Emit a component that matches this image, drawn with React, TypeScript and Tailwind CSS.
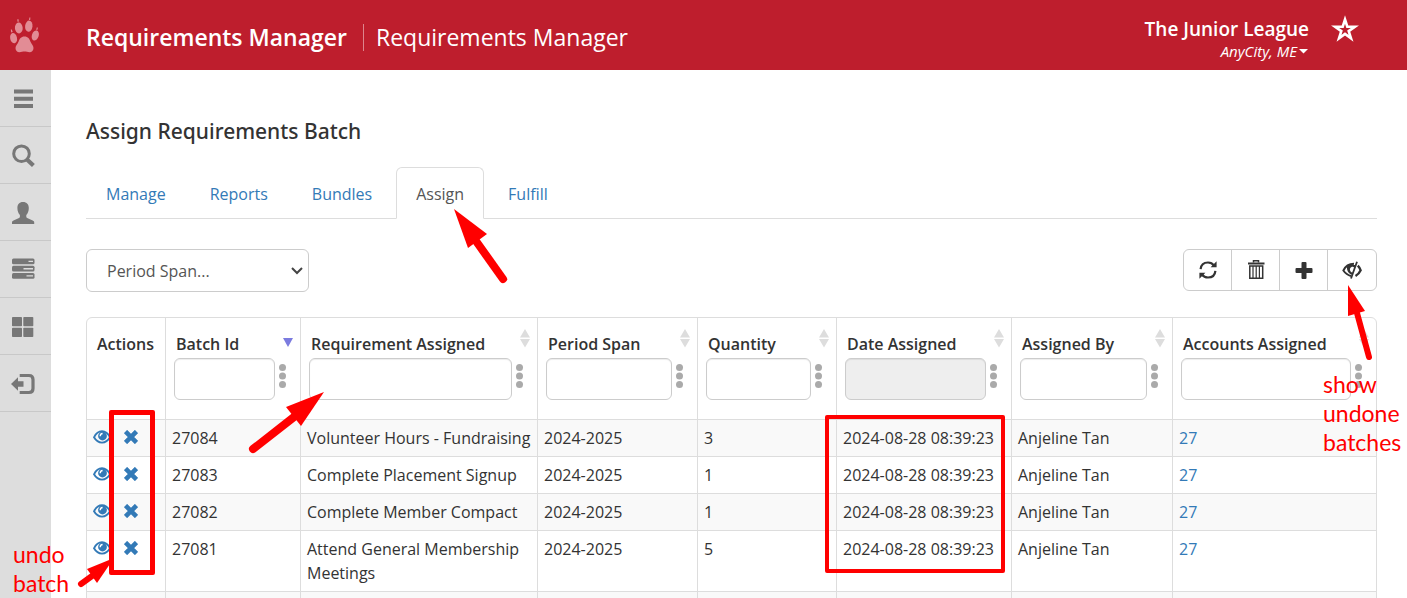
import React from "react";

type Batch = {
  id: string;
  requirement: string;
  period: string;
  quantity: number;
  date: string;
  assignedBy: string;
  accounts: number;
};

type Column = {
  label: string;
  width: string;
  sort?: "none" | "desc";
  disabled?: boolean;
};

const columns: Column[] = [
  { label: "Batch Id", width: "w-[135px]", sort: "desc" },
  { label: "Requirement Assigned", width: "w-[237px]", sort: "none" },
  { label: "Period Span", width: "w-[160px]", sort: "none" },
  { label: "Quantity", width: "w-[139px]", sort: "none" },
  {
    label: "Date Assigned",
    width: "w-[175px]",
    sort: "none",
    disabled: true,
  },
  { label: "Assigned By", width: "w-[161px]", sort: "none" },
  { label: "Accounts Assigned", width: "w-auto", sort: "none" },
];

const requirements = [
  "Volunteer Hours - Fundraising",
  "Complete Placement Signup",
  "Complete Member Compact",
  "Attend General Membership Meetings",
];

const quantities = [3, 1, 1, 5];

const batches: Batch[] = requirements.map((requirement, i) => ({
  id: String(27084 - i),
  requirement,
  period: "2024-2025",
  quantity: quantities[i],
  date: "2024-08-28 08:39:23",
  assignedBy: "Anjeline Tan",
  accounts: 27,
}));

const tabs = ["Manage", "Reports", "Bundles", "Assign", "Fulfill"];

const PawIcon = () => (
  <svg viewBox="0 0 30 36" className="h-9 w-[30px]" fill="#e28c95">
    <ellipse cx="9.8" cy="11" rx="3.9" ry="5.4" transform="rotate(-4 9.8 11)" />
    <ellipse cx="19.8" cy="9.2" rx="3.7" ry="5.6" transform="rotate(7 19.8 9.2)" />
    <ellipse cx="4.6" cy="21.2" rx="3.4" ry="5.2" transform="rotate(-12 4.6 21.2)" />
    <ellipse cx="26.3" cy="18.5" rx="3.4" ry="5.2" transform="rotate(18 26.3 18.5)" />
    <path d="M15.500 19.500c3.500 0 5 2.400 6 5.200.8 2 3 3.600 3 6.300 0 2.600-1.600 4.200-4 4.200-2 0-3-.7-5-.7s-3 .7-5 .7c-2.400 0-4-1.600-4-4.200 0-2.700 2.300-4.300 3-6.300 1-2.800 2.500-5.200 6-5.200z" />
    <path d="M8.300 4.500l.2-2.500 1 .2.300 2.500zM20 3l.4-2.600 1 .2-.2 2.500zM2.200 15.500l-.4-2.900 1-.2.900 2.500zM27.200 12.800l.7-2.500 1 .4-.6 2.400z" />
  </svg>
);

const MenuIcon = () => (
  <svg viewBox="0 0 24 24" className="size-6" fill="#777">
    <path d="M3 2.500h19v4H3zM3 9.700h19v4H3zM3 17h19v4H3z" />
  </svg>
);

const SearchIcon = () => (
  <svg viewBox="0 0 24 24" className="size-6" fill="none" stroke="#777">
    <circle cx="10.500" cy="9.700" r="7.800" strokeWidth="3" />
    <path d="M16 15.500l6.400 6" strokeWidth="4.200" />
  </svg>
);

const UserIcon = () => (
  <svg viewBox="0 0 24 24" className="size-6" fill="#777">
    <path d="M12 1c3.800 0 5.800 2.500 5.800 6 0 3.200-1 5.300-2.500 7v1.700c0 .7.300 1 .9 1.300l5.500 2.500c1 .5 1.500 1 1.500 2V23H1v-1.500c0-1 .5-1.500 1.500-2L8 17c.6-.3.900-.6.900-1.300V14c-1.500-1.700-2.500-3.800-2.500-7 0-3.500 1.800-6 5.600-6z" />
  </svg>
);

const TasksIcon = () => (
  <svg viewBox="0 0 24 24" className="size-6" fill="#777">
    <rect x="1" y=".500" width="22.500" height="5.800" rx="1.500" />
    <rect x="1" y="7.800" width="22.500" height="5.800" rx="1.500" />
    <rect x="1" y="15" width="22.500" height="5.800" rx="1.500" />
    <path d="M17.500 2.700h4.500v1.400h-4.500zM12.500 10H22v1.500h-9.500zM15.500 17.200H22v1.400h-6.500z" fill="#ddd" />
  </svg>
);

const GridIcon = () => (
  <svg viewBox="0 0 24 24" className="size-6" fill="#777">
    <rect x="1" y="2" width="10" height="9.200" rx=".8" />
    <rect x="12.300" y="2" width="10" height="9.200" rx=".8" />
    <rect x="1" y="12.800" width="10" height="9.200" rx=".8" />
    <rect x="12.300" y="12.800" width="10" height="9.200" rx=".8" />
  </svg>
);

const LogoutIcon = () => (
  <svg viewBox="0 0 24 24" className="size-6" fill="#777">
    <path d="M0 12l7-6.700v4h5.500v5.400H7v4z" />
    <path d="M8.700 3.500h9.300c2.700 0 4 1.300 4 4v9c0 2.700-1.300 4-4 4H8.700" fill="none" stroke="#777" strokeWidth="3.200" />
  </svg>
);

const RefreshIcon = () => (
  <svg viewBox="0 0 20 20" className="size-5" fill="none" stroke="#333" strokeWidth="2.200">
    <path d="M2.600 9.200C3 5 6 2.500 10 2.500c2.600 0 4.600 1 6 3M17.400 10.800c-.4 4.200-3.400 6.700-7.400 6.700-2.600 0-4.600-1-6-3" />
    <path d="M18.600 1.300v6h-6zM1.400 18.700v-6h6z" fill="#333" stroke="none" />
  </svg>
);

const TrashIcon = () => (
  <svg viewBox="0 0 20 20" className="size-5" fill="none" stroke="#333">
    <path d="M7.500 2.500V.8h5v1.700" strokeWidth="1.500" />
    <path d="M2 3.500h16.500" strokeWidth="2" />
    <path d="M3.800 6v12.200h12.900V6z" strokeWidth="1.500" />
    <path d="M7 6v12M10.200 6v12M13.400 6v12" strokeWidth="1.200" />
  </svg>
);

const PlusIcon = () => (
  <svg viewBox="0 0 20 20" className="size-5" fill="#333">
    <rect x="7.500" y="2" width="5" height="17" rx="1" />
    <rect x="1.500" y="8" width="17" height="5" rx="1" />
  </svg>
);

const HideIcon = () => (
  <svg viewBox="0 0 20 20" className="size-5" fill="none" stroke="#333">
    <path d="M9 16c-3.500-.8-6-3.200-7.600-5.500C3 7 6.500 3.800 12 3.800" strokeWidth="2" />
    <path d="M5.500 5h8.200l-1.200 3.200c-.8-1.300-2-1.600-3-1.200-1.600.6-2 2.500-1.200 4 .6 1.200 1.500 1.500 2.700 1.500l-.8 2.300C6.300 13.800 3.800 9.500 5.500 5z" fill="#333" stroke="none" />
    <path d="M15 1.800L9 18.500" strokeWidth="1.800" />
    <path d="M15.800 5.600c1.300 1.300 2.300 3 2.900 4.700-.9 2-2.600 4.200-5.200 5.700" strokeWidth="2.300" />
  </svg>
);

const EyeIcon = () => (
  <svg viewBox="0 0 18 14" className="h-3.5 w-[18px]" fill="none" stroke="#337ab7">
    <path d="M1 7.300C3 3.300 6 1.300 9 1.300s6 2 8 6c-2 3.500-5 5.300-8 5.300s-6-1.800-8-5.300z" strokeWidth="1.900" />
    <circle cx="9.500" cy="6" r="4.400" fill="#337ab7" stroke="none" />
    <path d="M7.200 6.200c0-1.600.8-2.500 2.400-2.700" stroke="#fff" strokeWidth="1.400" />
  </svg>
);

const CrossIcon = () => (
  <svg viewBox="0 0 14 14" className="size-3.5" stroke="#337ab7" strokeWidth="4.600">
    <path d="M1.500 1.500l11 11M12.500 1.500l-11 11" />
  </svg>
);

const SortIcon = ({ direction }: { direction: "none" | "desc" }) => {
  if (direction === "desc") {
    return (
      <svg viewBox="0 0 12 20" className="h-5 w-3">
        <path d="M1 10h10L6 19z" fill="#7b7bdf" />
      </svg>
    );
  }
  return (
    <svg viewBox="0 0 12 20" className="h-5 w-3" fill="#ddd">
      <path d="M6 1l5 8.500H1zM1 11h10l-5 8.500z" />
    </svg>
  );
};

const DotsIcon = () => (
  <svg viewBox="0 0 8 24" className="h-6 w-2" fill="#aaa">
    <circle cx="3.500" cy="3.500" r="3.500" />
    <circle cx="3.500" cy="12" r="3.500" />
    <circle cx="3.500" cy="20.500" r="3.500" />
  </svg>
);

const Header = () => (
  <header className="flex h-[70px] items-center bg-[#be1e2d] text-white">
    <a href="#" aria-label="Home" className="ml-[9px] w-[77px]">
      <PawIcon />
    </a>
    <h1 className="flex items-center pt-1 text-[23px] leading-8">
      <span className="font-semibold">Requirements Manager</span>
      <span className="mr-3 ml-4 h-[27px] w-px bg-[#dd858d]" />
      <span>Requirements Manager</span>
    </h1>
    <div className="ml-auto flex items-start">
      <button className="flex flex-col items-end pt-2">
        <span className="text-[19px] leading-6 font-semibold">
          The Junior League
        </span>
        <span className="flex items-center text-[15px] leading-5 italic">
          AnyCity, ME
          <svg viewBox="0 0 12 8" className="h-2 w-3" fill="white">
            <path d="M2 2h9L6.500 6.500z" />
          </svg>
        </span>
      </button>
      <button aria-label="Favorite" className="mt-1.5 mr-12 ml-[22px]">
        <svg viewBox="0 0 28 28" className="size-7" fill="none" stroke="white" strokeWidth="2.600">
          <path d="M14 4.500l2.300 7.200h7.600l-6.200 4.400 2.300 7.200-6-4.400-6 4.400 2.300-7.200-6.200-4.400h7.600z" />
        </svg>
      </button>
    </div>
  </header>
);

const sideItems = [
  { name: "Menu", icon: <MenuIcon /> },
  { name: "Search", icon: <SearchIcon /> },
  { name: "Account", icon: <UserIcon /> },
  { name: "Tasks", icon: <TasksIcon /> },
  { name: "Dashboard", icon: <GridIcon /> },
  { name: "Log out", icon: <LogoutIcon /> },
];

const Sidebar = () => (
  <nav className="w-[51px] shrink-0 bg-[#ddd]">
    {sideItems.map((item) => (
      <a
        key={item.name}
        href="#"
        aria-label={item.name}
        className="flex h-[57px] items-center border-b border-[#c8c8c8] pt-0.5 pl-[11px]"
      >
        {item.icon}
      </a>
    ))}
  </nav>
);

const Tabs = () => (
  <div className="mt-[21px] flex gap-1 border-b border-[#ddd]">
    {tabs.map((tab) => (
      <a
        key={tab}
        href="#"
        className={
          tab === "Assign"
            ? "-mb-px rounded-t-md border border-[#ddd] border-b-white bg-white px-[19px] pt-3.5 pb-3 text-base leading-6 text-[#555]"
            : "-mb-px border border-transparent px-[19px] pt-3.5 pb-3 text-base leading-6 text-[#337ab7]"
        }
      >
        {tab}
      </a>
    ))}
  </div>
);

const toolButton =
  "flex w-12 items-center justify-center border-r border-[#ccc] last:border-r-0";

const Toolbar = () => (
  <div className="mt-[30px] flex items-start justify-between">
    <div className="relative">
      <select
        aria-label="Period Span"
        className="h-[43px] w-[223px] appearance-none rounded-md border border-[#ccc] bg-white px-5 text-base text-[#555]"
      >
        <option>Period Span...</option>
      </select>
      <svg viewBox="0 0 12 8" className="pointer-events-none absolute top-[18px] right-1.5 h-2 w-3" fill="none" stroke="#444" strokeWidth="2">
        <path d="M1 1l5 5 5-5" />
      </svg>
    </div>
    <div className="flex h-[42px] rounded-md border border-[#ccc] bg-white">
      <button aria-label="Refresh" className={toolButton}>
        <RefreshIcon />
      </button>
      <button aria-label="Delete" className={toolButton}>
        <TrashIcon />
      </button>
      <button aria-label="Add" className={toolButton}>
        <PlusIcon />
      </button>
      <button aria-label="Show undone batches" className={toolButton}>
        <HideIcon />
      </button>
    </div>
  </div>
);

const cell = "border-t border-r border-[#ddd] py-1.5 pl-1.5 last:border-r-0";

const BatchTable = () => (
  <div className="mt-[25px] overflow-hidden rounded-md border border-[#ddd]">
    <table className="w-full table-fixed border-separate border-spacing-0 text-left text-base leading-6 text-[#333]">
      <thead>
        <tr className="align-top">
          <th className="h-[101px] w-[79px] border-r border-[#ddd] pt-3.5 pl-2.5 font-semibold">
            Actions
          </th>
          {columns.map((col) => (
            <th
              key={col.label}
              className={`${col.width} relative border-r border-[#ddd] pt-3.5 pr-[13px] pl-2 font-semibold last:border-r-0`}
            >
              <div className="pl-0.5 whitespace-nowrap">{col.label}</div>
              <div className="mt-0.5 flex items-start gap-1">
                <input
                  type="text"
                  aria-label={col.label}
                  disabled={col.disabled}
                  className="h-[42px] w-full min-w-0 rounded-md border border-[#ccc] bg-white px-3 font-normal shadow-[inset_0_1px_1px_rgba(0,0,0,0.075)] disabled:bg-[#eee]"
                />
                <button aria-label={`${col.label} filter`} className="mt-1.5">
                  <DotsIcon />
                </button>
              </div>
              {col.sort && (
                <button
                  aria-label={`Sort by ${col.label}`}
                  className="absolute top-2.5 right-1.5"
                >
                  <SortIcon direction={col.sort} />
                </button>
              )}
            </th>
          ))}
        </tr>
      </thead>
      <tbody>
        {batches.map((batch) => (
          <tr key={batch.id} className="align-top odd:bg-[#f9f9f9]">
            <td className="border-t border-r border-[#ddd] px-1.5 py-2.5">
              <div className="flex items-center gap-[13px]">
                <button aria-label={`View ${batch.id}`}>
                  <EyeIcon />
                </button>
                <button aria-label={`Undo ${batch.id}`}>
                  <CrossIcon />
                </button>
              </div>
            </td>
            <td className={cell}>{batch.id}</td>
            <td className={cell}>{batch.requirement}</td>
            <td className={cell}>{batch.period}</td>
            <td className={cell}>{batch.quantity}</td>
            <td className={cell}>{batch.date}</td>
            <td className={cell}>{batch.assignedBy}</td>
            <td className={cell}>
              <a href="#" className="text-[#337ab7]">
                {batch.accounts}
              </a>
            </td>
          </tr>
        ))}
        <tr className="h-10 odd:bg-[#f9f9f9]">
          <td className={cell} />
          {columns.map((col) => (
            <td key={col.label} className={cell} />
          ))}
        </tr>
      </tbody>
    </table>
  </div>
);

// Red callouts drawn over the page
const Callouts = () => (
  <div className="pointer-events-none absolute inset-0 font-[Lato,sans-serif] text-[23px] leading-[29px] text-[#f00]">
    <svg viewBox="0 0 56 78" className="absolute top-[208px] left-[453px] h-[78px] w-14" fill="#f00">
      <path d="M1 1l33 25-19 14z" />
      <path d="M23 33l27 38" stroke="#f00" strokeWidth="8" strokeLinecap="round" />
    </svg>
    <svg viewBox="0 0 78 64" className="absolute top-[391px] left-[247px] h-16 w-[78px]" fill="#f00">
      <path d="M77 1L39 16l15 19z" />
      <path d="M47 26L6 58" stroke="#f00" strokeWidth="8" strokeLinecap="round" />
    </svg>
    <svg viewBox="0 0 30 80" className="absolute top-[284px] right-[31px] h-20 w-[30px]" fill="#f00">
      <path d="M2 1l17 26-17 5z" />
      <path d="M11 29l12 44" stroke="#f00" strokeWidth="6" strokeLinecap="round" />
    </svg>
    <svg viewBox="0 0 40 32" className="absolute top-[557px] left-[76px] h-8 w-10" fill="#f00">
      <path d="M38 1L11 12l10 14z" />
      <path d="M16 19L5 27" stroke="#f00" strokeWidth="6" strokeLinecap="round" />
    </svg>
    <div className="absolute top-[410px] left-[109px] h-[165px] w-[46px] rounded-xs border-5 border-[#f00]" />
    <div className="absolute top-[415px] left-[825px] h-[158px] w-[180px] rounded-xs border-4 border-[#f00]" />
    <p className="absolute top-[540px] left-[13px] w-16">undo batch</p>
    <p className="absolute top-[370px] right-0 w-[84px]">
      show undone batches
    </p>
  </div>
);

const App: React.FC = () => {
  return (
    <div className="relative flex h-screen flex-col overflow-hidden bg-white font-['Open_Sans','Noto_Sans',sans-serif]">
      <Header />
      <div className="flex min-h-0 flex-1">
        <Sidebar />
        <main className="min-w-0 flex-1 pt-[46px] pr-[30px] pl-[35px]">
          <h2 className="font-['Noto_Sans','Open_Sans',sans-serif] text-[21px] leading-[30px] font-medium text-[#333]">
            Assign Requirements Batch
          </h2>
          <Tabs />
          <Toolbar />
          <BatchTable />
        </main>
      </div>
      <Callouts />
    </div>
  );
};

export default App;
